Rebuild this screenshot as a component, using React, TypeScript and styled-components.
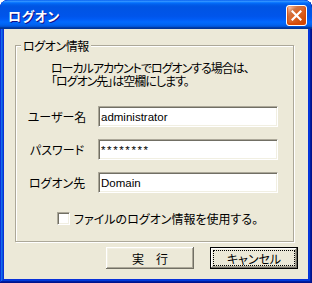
import styled, { createGlobalStyle } from 'styled-components';

const GlobalStyle = createGlobalStyle`
  html, body {
    margin: 0;
    padding: 0;
    background: #fff;
  }
  body {
    font-family: "Noto Sans CJK JP", sans-serif;
  }
`

const Window = styled.div`
  width: 312px;
  height: 283px;
  display: flex;
  flex-direction: column;
  background: #0831d9;
  border-radius: 8px 8px 0 0;
  box-shadow: inset -1px -1px #00138c, inset 1px 1px #0831d9, inset -2px -2px #001ea0,
    inset 2px 2px #166aee, inset -3px -3px #003bda, inset 3px 3px #0855dd;
  overflow: hidden;
`
const TitleBar = styled.div`
  height: 29px;
  box-sizing: border-box;
  padding: 2px 5px 0 8px;
  display: flex;
  align-items: center;
  justify-content: space-between;
  border-radius: 8px 8px 0 0;
  background: linear-gradient(
    180deg,
    #0058ee 0%, #3593ff 4%, #288eff 6%, #127dff 8%, #036ffc 10%, #0262ee 14%,
    #0057e5 20%, #0054e3 24%, #0055eb 56%, #005bf5 66%, #026afe 76%,
    #0062ef 86%, #0052d6 92%, #0040ab 94%, #003092 100%
  );
`
const Title = styled.span`
  color: #fff;
  font-size: 13px;
  font-weight: 700;
  font-feature-settings: "palt";
  letter-spacing: 0.5px;
  text-shadow: 1px 1px #0f1089;
`
const CloseButton = styled.button`
  width: 21px;
  height: 21px;
  padding: 0;
  display: flex;
  align-items: center;
  justify-content: center;
  border: 1px solid #fff;
  border-radius: 3px;
  background-image: radial-gradient(circle at 90% 90%, #cc4600 0%, #dc6527 55%, #cd7546 70%, #ffccb2 90%, #fff 100%);
  box-shadow: inset 0 -1px 2px 1px #da4600;
`
const Client = styled.div`
  flex: 1;
  margin: 0 4px 4px 4px;
  background: #ece9d8;
  display: flex;
  flex-direction: column;
  font-size: 12px;
  font-feature-settings: "palt";
  color: #000;
`
const Group = styled.fieldset`
  margin: 10px 14px 0 11px;
  padding: 0 0 16px 0;
  min-width: 0;
  border: 1px solid #aca899;
  box-shadow: inset 1px 1px #fff, 1px 1px #fff;
`
const Legend = styled.legend`
  margin-left: 5px;
  padding: 0 2px;
  line-height: 13px;
  letter-spacing: -0.4px;
  background: #ece9d8;
`
const Note = styled.p`
  margin: 9px 0 0 35px;
  line-height: 13px;
  letter-spacing: -1px;
`
const Rows = styled.div`
  margin-top: 19px;
  display: flex;
  flex-direction: column;
  gap: 12px;
`
const Row = styled.div`
  display: flex;
  align-items: center;
  height: 21px;
`
const Label = styled.label`
  width: 82px;
  text-align: center;
  line-height: 13px;
`
const Field = styled.input<{ $masked?: boolean }>`
  width: 180px;
  height: 21px;
  box-sizing: border-box;
  margin: 0;
  padding: 0 2px;
  border: 1px solid;
  border-color: #aca899 #fff #fff #aca899;
  box-shadow: inset 1px 1px #716f64, inset -1px -1px #f1efe2;
  background: #fff;
  outline: none;
  color: #000;
  font-family: "Liberation Sans", Arial, sans-serif;
  font-size: 11.5px;
  letter-spacing: ${(props) => (props.$masked ? '1.6px' : '0')};
`
const CheckRow = styled.div`
  margin: 19px 0 0 41px;
  display: flex;
  align-items: center;
  gap: 4px;
  height: 13px;
`
const Box = styled.span`
  width: 13px;
  height: 13px;
  box-sizing: border-box;
  border: 1px solid;
  border-color: #aca899 #fff #fff #aca899;
  box-shadow: inset 1px 1px #716f64, inset -1px -1px #f1efe2;
  background: #fff;
`
const Buttons = styled.div`
  margin-top: 5px;
  padding-right: 10px;
  display: flex;
  justify-content: flex-end;
  gap: 16px;
`
const Button = styled.button<{ $default?: boolean }>`
  width: 88px;
  height: 22px;
  box-sizing: border-box;
  padding: ${(props) => (props.$default ? '2px' : '3px')};
  display: flex;
  background: #ece9d8;
  border: ${(props) => (props.$default ? '1px solid #000' : 'none')};
  box-shadow: inset -1px -1px #716f64, inset 1px 1px #fff, inset -2px -2px #aca899, inset 2px 2px #f1efe2;
  font-family: "Noto Sans CJK JP", sans-serif;
  font-size: 12px;
  font-feature-settings: "palt";
  color: #000;
`
const Caption = styled.span<{ $focused?: boolean }>`
  flex: 1;
  display: flex;
  align-items: center;
  justify-content: center;
  border: 1px dotted ${(props) => (props.$focused ? '#000' : 'transparent')};
  line-height: 13px;
`

export default function App() {
  return (
    <>
      <GlobalStyle />
      <Window>
        <TitleBar>
          <Title>ログオン</Title>
          <CloseButton aria-label="閉じる">
            <svg width="11" height="11" viewBox="0 0 11 11">
              <path d="M1.5 1.5 L9.5 9.5 M9.5 1.5 L1.5 9.5" stroke="#fff" strokeWidth="2.2" strokeLinecap="square" />
            </svg>
          </CloseButton>
        </TitleBar>
        <Client>
          <Group>
            <Legend>ログオン情報</Legend>
            <Note>
              ローカルアカウントでログオンする場合は、
              <br />
              「ログオン先」は空欄にします。
            </Note>
            <Rows>
              <Row>
                <Label>ユーザー名</Label>
                <Field defaultValue="administrator" />
              </Row>
              <Row>
                <Label>パスワード</Label>
                <Field $masked defaultValue="********" />
              </Row>
              <Row>
                <Label>ログオン先</Label>
                <Field defaultValue="Domain" />
              </Row>
            </Rows>
            <CheckRow>
              <Box />
              <span>ファイルのログオン情報を使用する。</span>
            </CheckRow>
          </Group>
          <Buttons>
            <Button>
              <Caption>実　行</Caption>
            </Button>
            <Button $default>
              <Caption $focused>キャンセル</Caption>
            </Button>
          </Buttons>
        </Client>
      </Window>
    </>
  )
}
